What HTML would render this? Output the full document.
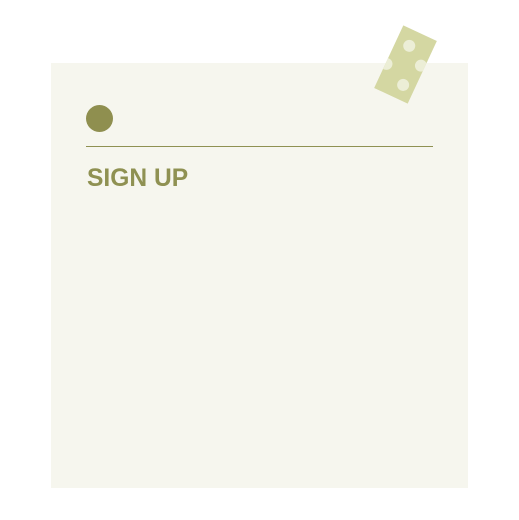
<!DOCTYPE html>
<html><head><style>
html,body{margin:0;padding:0;background:#fff;width:519px;height:520px;overflow:hidden;position:relative}
.card{position:absolute;left:51px;top:63px;width:417px;height:425px;background:#f6f6ee}
.dot{position:absolute;left:86px;top:105px;width:27px;height:27px;border-radius:50%;background:#8f8f4f}
.line{position:absolute;left:86px;top:146px;width:347px;height:1px;background:#8f9152}
.t{position:absolute;left:87px;top:165px;font:bold 24.6px "Liberation Sans",sans-serif;color:#8f9152;line-height:28px;margin:0}
.tape{position:absolute;left:387px;top:30px;width:37px;height:69px;background:#d3d6a0;transform:rotate(25deg);overflow:hidden;opacity:.97}
.tape i{position:absolute;width:12px;height:12px;border-radius:50%;background:#eceed6}
</style></head><body>
<div class="card"></div>
<div class="dot"></div>
<div class="line"></div>
<div class="t">SIGN UP</div>
<div class="tape"><i style="left:8px;top:10px"></i><i style="left:-5px;top:36px"></i><i style="left:27px;top:23px"></i><i style="left:19px;top:48px"></i></div>
</body></html>
